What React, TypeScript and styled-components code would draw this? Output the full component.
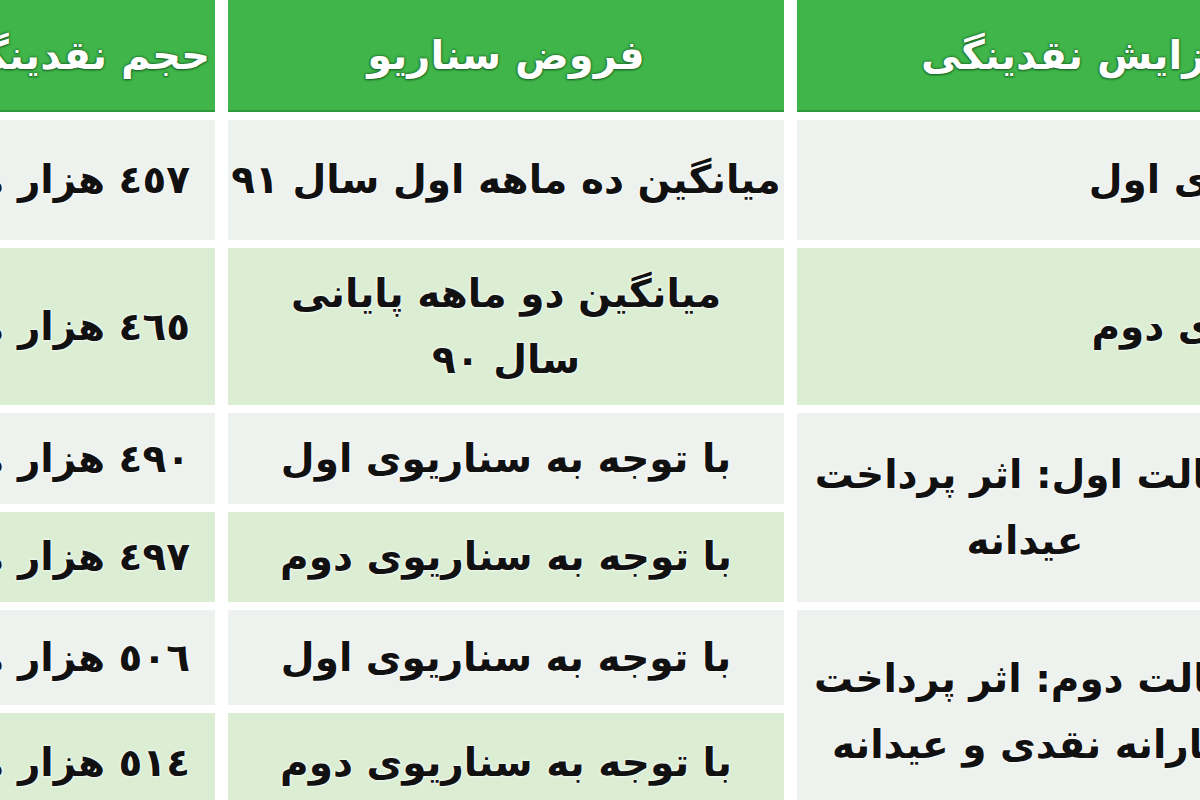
import React from "react";
import styled, { createGlobalStyle } from "styled-components";

const GlobalStyle = createGlobalStyle`
    html, body {
        margin: 0;
        padding: 0;
        background: #ffffff;
    }
`;

const Page = styled.div`
    width: 1200px;
    height: 800px;
    overflow: hidden;
    background: #ffffff;
    font-family: "DejaVu Sans", "Noto Sans", sans-serif;
`;

const Table = styled.div`
    display: grid;
    grid-template-columns: 215px 556px 600px;
    grid-template-rows: 112px 120px 157px 91px 90px 95px 100px;
    column-gap: 13px;
    row-gap: 8px;
    width: 1397px;
`;

type CellProps = {
    $col: number;
    $row: number;
    $span?: number;
    $tone?: "grey" | "green";
    $align?: "center" | "right";
    $padRight?: number;
};

const tones = {
    grey: "#eef2ee",
    green: "#dbeed4",
};

const Cell = styled.div<CellProps>`
    grid-column: ${({ $col }) => $col};
    grid-row: ${({ $row, $span }) => `${$row} / span ${$span ?? 1}`};
    background-color: ${({ $tone }) => tones[$tone ?? "grey"]};
    display: flex;
    flex-direction: column;
    justify-content: center;
    overflow: hidden;
    box-sizing: border-box;
    direction: rtl;
    text-align: ${({ $align }) => $align ?? "center"};
    padding-right: ${({ $padRight }) => $padRight ?? 0}px;
    color: #111111;
    font-size: 39px;
    font-weight: bold;
    line-height: 66px;
    white-space: nowrap;
    text-shadow: 0 0 3px #ffffff, 0 0 2px #ffffff;
`;

const HeadCell = styled(Cell)`
    background-color: #3fb54a;
    border-bottom: 2px solid #2f9a3b;
    color: #ffffff;
    font-size: 40px;
    text-shadow: 0 0 2px #1d6a27, 0 0 3px #1d6a27, 0 1px 2px #1d6a27;
`;

const volumes = [
    "٤٥٧ هزار میلیارد",
    "٤٦٥ هزار میلیارد",
    "٤٩٠ هزار میلیارد",
    "٤٩٧ هزار میلیارد",
    "٥٠٦ هزار میلیارد",
    "٥١٤ هزار میلیارد",
];

const App = () => {
    return (
        <Page>
            <GlobalStyle />
            <Table>
                <HeadCell $col={1} $row={1} $align="right" $padRight={5}>
                    حجم نقدینگی
                </HeadCell>
                <HeadCell $col={2} $row={1}>
                    فروض سناریو
                </HeadCell>
                <HeadCell $col={3} $row={1} $align="right" $padRight={150}>
                    افزایش نقدینگی
                </HeadCell>

                {volumes.map((v, i) => (
                    <Cell
                        key={v}
                        $col={1}
                        $row={i + 2}
                        $tone={i % 2 === 0 ? "grey" : "green"}
                        $align="right"
                        $padRight={25}
                    >
                        {v}
                    </Cell>
                ))}

                <Cell $col={2} $row={2}>
                    میانگین ده ماهه اول سال ٩١
                </Cell>
                <Cell $col={2} $row={3} $tone="green">
                    <span>میانگین دو ماهه پایانی</span>
                    <span>سال ٩٠</span>
                </Cell>
                <Cell $col={2} $row={4}>
                    با توجه به سناریوی اول
                </Cell>
                <Cell $col={2} $row={5} $tone="green">
                    با توجه به سناریوی دوم
                </Cell>
                <Cell $col={2} $row={6}>
                    با توجه به سناریوی اول
                </Cell>
                <Cell $col={2} $row={7} $tone="green">
                    با توجه به سناریوی دوم
                </Cell>

                <Cell $col={3} $row={2} $align="right" $padRight={57}>
                    سناریوی اول
                </Cell>
                <Cell $col={3} $row={3} $tone="green" $align="right" $padRight={53}>
                    سناریوی دوم
                </Cell>
                <Cell $col={3} $row={4} $span={2} $padRight={144}>
                    <span>حالت اول: اثر پرداخت</span>
                    <span>عیدانه</span>
                </Cell>
                <Cell $col={3} $row={6} $span={2} $padRight={144}>
                    <span>حالت دوم: اثر پرداخت</span>
                    <span>یارانه نقدی و عیدانه</span>
                </Cell>
            </Table>
        </Page>
    );
};

export default App;
